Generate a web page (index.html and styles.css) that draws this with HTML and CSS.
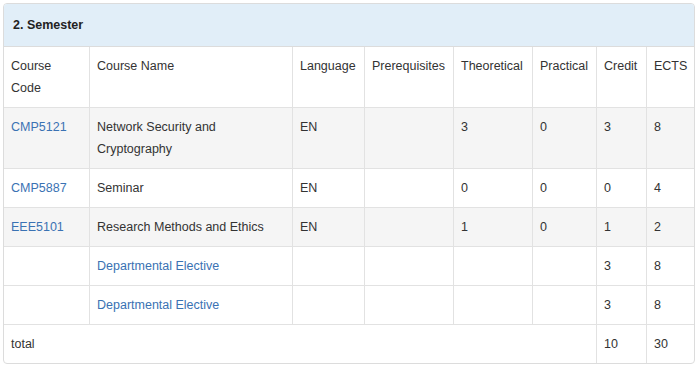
FILE: index.html
```html
<!DOCTYPE html>
<html lang="en">
<head>
<meta charset="utf-8">
<title>2. Semester</title>
<link rel="stylesheet" href="styles.css">
</head>
<body>
<div class="panel">
  <div class="panel-heading">2. Semester</div>
  <table class="courses">
    <colgroup>
      <col class="c-code">
      <col class="c-name">
      <col class="c-lang">
      <col class="c-pre">
      <col class="c-theo">
      <col class="c-prac">
      <col class="c-cred">
      <col class="c-ects">
    </colgroup>
    <tbody>
      <tr class="head-row">
        <td>Course<br>Code</td>
        <td>Course Name</td>
        <td>Language</td>
        <td>Prerequisites</td>
        <td>Theoretical</td>
        <td>Practical</td>
        <td>Credit</td>
        <td>ECTS</td>
      </tr>
      <tr class="striped">
        <td><a href="#">CMP5121</a></td>
        <td>Network Security and<br>Cryptography</td>
        <td>EN</td>
        <td></td>
        <td>3</td>
        <td>0</td>
        <td>3</td>
        <td>8</td>
      </tr>
      <tr>
        <td><a href="#">CMP5887</a></td>
        <td>Seminar</td>
        <td>EN</td>
        <td></td>
        <td>0</td>
        <td>0</td>
        <td>0</td>
        <td>4</td>
      </tr>
      <tr class="striped">
        <td><a href="#">EEE5101</a></td>
        <td>Research Methods and Ethics</td>
        <td>EN</td>
        <td></td>
        <td>1</td>
        <td>0</td>
        <td>1</td>
        <td>2</td>
      </tr>
      <tr>
        <td></td>
        <td><a href="#">Departmental Elective</a></td>
        <td></td>
        <td></td>
        <td></td>
        <td></td>
        <td>3</td>
        <td>8</td>
      </tr>
      <tr>
        <td></td>
        <td><a href="#">Departmental Elective</a></td>
        <td></td>
        <td></td>
        <td></td>
        <td></td>
        <td>3</td>
        <td>8</td>
      </tr>
      <tr class="total-row">
        <td colspan="6">total</td>
        <td>10</td>
        <td>30</td>
      </tr>
    </tbody>
  </table>
</div>
</body>
</html>
```

FILE: styles.css
```css
html, body {
  margin: 0;
  padding: 0;
  background: #fff;
}
body {
  padding: 3px 6px 0 3px;
  font-family: "Liberation Sans", Arial, Helvetica, sans-serif;
  font-size: 12.5px;
  line-height: 22px;
  color: #333;
}
.panel {
  width: 692px;
  box-sizing: border-box;
  border: 1px solid #dcdcdc;
  border-radius: 4px;
  overflow: hidden;
  background: #fff;
}
.panel-heading {
  background: #e1eef8;
  padding: 10px 10px 10px 9px;
  font-weight: bold;
  color: #222;
  border-bottom: 1px solid #dcdcdc;
}
.courses {
  table-layout: fixed;
  border-collapse: separate;
  border-spacing: 0;
  width: 690px;
}
.c-code { width: 86px; }
.c-name { width: 203px; }
.c-lang { width: 72px; }
.c-pre { width: 89px; }
.c-theo { width: 79px; }
.c-prac { width: 64px; }
.c-cred { width: 50px; }
.c-ects { width: 47px; }
.courses td {
  box-sizing: border-box;
  padding: 8px 7px 8px 7px;
  vertical-align: top;
  border-right: 1px solid #e2e2e2;
  border-top: 1px solid #e2e2e2;
  text-align: left;
}
.courses td:last-child {
  border-right: 0;
}
.courses tr:first-child td {
  border-top: 0;
}
.courses tr.striped td {
  background: #f5f5f5;
}
.courses a {
  color: #3a72b3;
  text-decoration: none;
}
```
